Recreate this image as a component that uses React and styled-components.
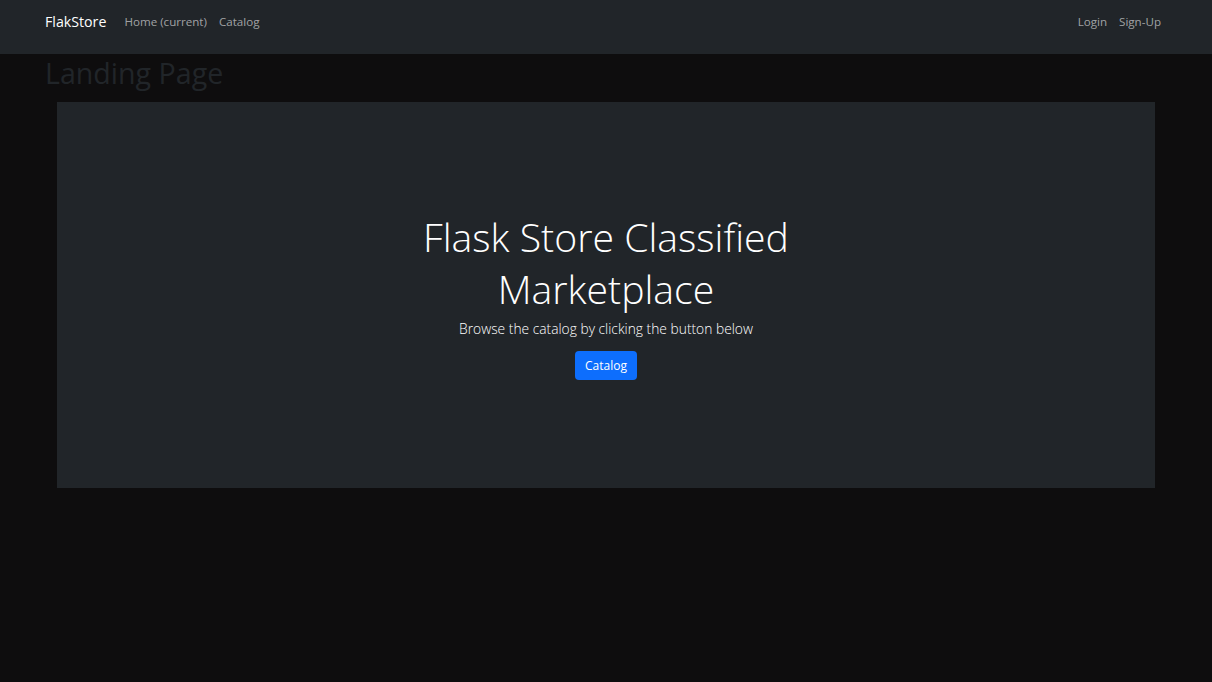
import React from 'react';
import styled, { createGlobalStyle } from 'styled-components';

const Global = createGlobalStyle`
  html, body {
    margin: 0;
    background: #0e0d0e;
    font-family: "Open Sans", "Noto Sans", sans-serif;
    color: #fff;
  }
`;

const Nav = styled.nav`
  background: #212529;
  height: 54px;
  box-sizing: border-box;
  padding-top: 10px;
`;

const Container = styled.div`
  width: 1140px;
  box-sizing: border-box;
  margin: 0 auto;
  padding: 0 12px;
  display: flex;
  align-items: center;
  height: 22px;
`;

const Brand = styled.a`
  color: #fff;
  font-size: 14.2px;
  text-decoration: none;
  margin-right: 18px;
  margin-left: -3px;
`;

const NavGroup = styled.div`
  display: flex;
  gap: 12px;
  margin-left: ${p => (p.$right ? 'auto' : '0')};
  margin-right: ${p => (p.$right ? '3px' : '0')};
`;

const NavLink = styled.a`
  color: rgba(255, 255, 255, 0.58);
  font-size: 11.6px;
  text-decoration: none;
`;

const Main = styled.main`
  width: 1140px;
  box-sizing: border-box;
  margin: 0 auto;
  padding: 0 12px;
`;

const PageTitle = styled.h2`
  margin: 1px 0 11px -3px;
  font-size: 28.6px;
  font-weight: 400;
  line-height: 36px;
  color: #212529;
`;

const Hero = styled.section`
  background: #212529;
  margin: 0 9px;
  height: 386px;
  display: flex;
  flex-direction: column;
  align-items: center;
  justify-content: center;
  text-align: center;
`;

const HeroTitle = styled.h1`
  margin: 0 0 2px;
  max-width: 520px;
  font-size: 39.2px;
  font-weight: 300;
  line-height: 52px;
`;

const Lead = styled.p`
  margin: 1px 0 11px;
  font-size: 13.8px;
  font-weight: 300;
  line-height: 22px;
`;

const Button = styled.a`
  background: #0d6efd;
  color: #fff;
  font-size: 12px;
  text-decoration: none;
  border-radius: 4px;
  height: 29px;
  padding: 0 10px;
  display: inline-flex;
  align-items: center;
  box-sizing: border-box;
`;

export default function App() {
  return (
    <>
      <Global />
      <Nav>
        <Container>
          <Brand href="#">FlakStore</Brand>
          <NavGroup>
            <NavLink href="#">Home (current)</NavLink>
            <NavLink href="#">Catalog</NavLink>
          </NavGroup>
          <NavGroup $right>
            <NavLink href="#">Login</NavLink>
            <NavLink href="#">Sign-Up</NavLink>
          </NavGroup>
        </Container>
      </Nav>
      <Main>
        <PageTitle>Landing Page</PageTitle>
        <Hero>
          <HeroTitle>Flask Store Classified Marketplace</HeroTitle>
          <Lead>Browse the catalog by clicking the button below</Lead>
          <Button href="#">Catalog</Button>
        </Hero>
      </Main>
    </>
  );
}
